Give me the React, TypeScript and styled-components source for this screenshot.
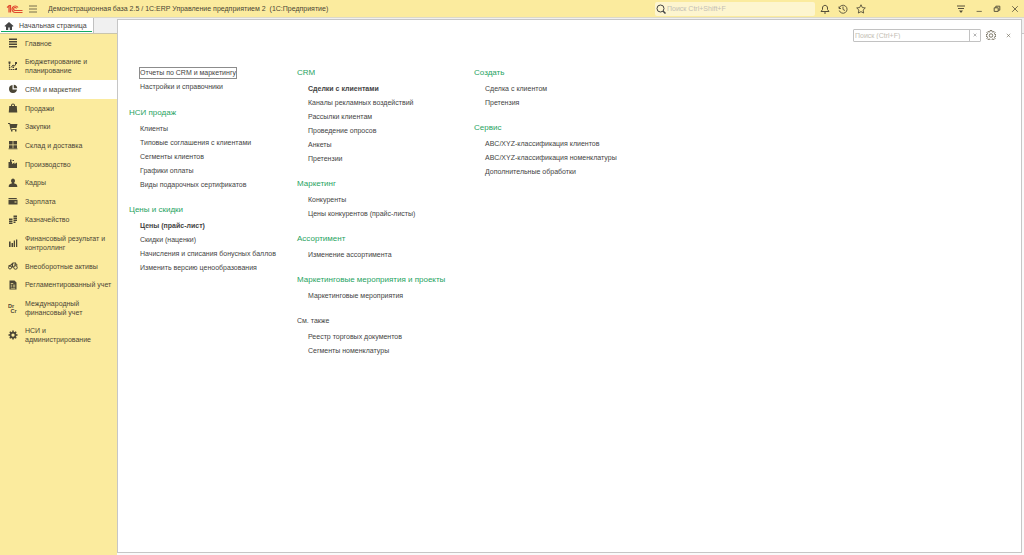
import React from 'react';
import styled, { createGlobalStyle, css } from 'styled-components';

const GlobalStyle = createGlobalStyle`
  *, *::before, *::after { box-sizing: border-box; }
  body {
    margin: 0;
    background: #fff;
    color: #444;
    font: 7px/9px "Liberation Sans", Arial, sans-serif;
  }
  button, input { font: inherit; color: inherit; }
  a { color: inherit; text-decoration: none; }
  ul { list-style: none; margin: 0; padding: 0; }
`;

const Page = styled.div`
  display: flex;
  flex-direction: column;
  min-height: 100vh;
`;

const TitleBar = styled.header`
  display: flex;
  align-items: center;
  height: 17px;
  padding-left: 6px;
  background: #fbeb9e;
`;

const IconButton = styled.button<{ $w?: number }>`
  display: flex;
  flex: none;
  align-items: center;
  justify-content: center;
  width: ${(p) => p.$w ?? 18}px;
  height: 16px;
  padding: 0;
  border: 0;
  background: none;
  color: #554f3a;
`;

const AppTitle = styled.h1`
  flex: 1;
  margin: 0 0 0 5px;
  overflow: hidden;
  color: #4a4535;
  font-size: 7px;
  font-weight: 400;
  line-height: 16px;
  white-space: pre;
`;

const GlobalSearch = styled.label`
  display: flex;
  align-items: center;
  width: 160px;
  height: 14px;
  margin-right: 1px;
  padding-left: 1px;
  border-radius: 2px;
  background: #fdf5cf;
`;

const SearchInput = styled.input`
  flex: 1;
  min-width: 0;
  height: 12px;
  padding: 0 1px;
  border: 0;
  outline: 0;
  background: transparent;
  font-size: 7px;
  &::placeholder { color: #c4c0b4; opacity: 1; }
`;

const WindowButtons = styled.div`
  display: flex;
  margin-left: 82px;
`;

const Body = styled.div`
  display: flex;
  flex: 1;
  padding-right: 2px;
  border-top: 1px solid #dcd9ca;
  background: linear-gradient(#f0f0f0 15px, #c8c8c8 15px, #c8c8c8 16px, #fafafa 16px);
`;

const Side = styled.aside`
  display: flex;
  flex: none;
  flex-direction: column;
  width: 117px;
`;

const TabBar = styled.div`
  height: 16px;
  border-bottom: 1px solid #c9c5ad;
  background: #f0f0f0;
`;

const HomeTab = styled.a`
  display: flex;
  align-items: center;
  width: 94px;
  height: 15px;
  padding: 0 2px 0 4px;
  gap: 5px;
  border-right: 1px solid #c0c0c0;
  background: #fff;
  white-space: nowrap;
  position: relative;
  &::after {
    content: "";
    position: absolute;
    right: 1px;
    bottom: 1px;
    left: 1px;
    height: 1px;
    background: #12ab62;
  }
`;

const Nav = styled.nav`
  flex: 1;
  background: #fbeb9e;
`;

const NavList = styled.ul`
  display: flex;
  flex-direction: column;
  height: 315px;
`;

const NavItem = styled.li<{ $lines: number; $active?: boolean }>`
  display: flex;
  flex: 0 1 ${(p) => (p.$lines === 2 ? 28 : 19)}px;
  align-items: center;
  min-height: 0;
  background: ${(p) => (p.$active ? '#fff' : 'transparent')};
`;

const NavLink = styled.a`
  display: flex;
  align-items: center;
  gap: 7px;
  padding-left: 8px;
  color: #4b4636;
  white-space: pre;
`;

const Panel = styled.main`
  flex: 1;
  min-width: 0;
  margin: 1px 0 2px;
  padding: 8px 4px 0 11px;
  border: 1px solid #c6c6c6;
  background: #fff;
`;

const PanelTools = styled.div`
  display: flex;
  align-items: center;
  justify-content: flex-end;
  height: 14px;
  margin-bottom: 23px;
`;

const PanelSearch = styled.div`
  display: flex;
  align-items: center;
  width: 128px;
  height: 13px;
  margin-right: 2px;
  border: 1px solid #c2c2c2;
  border-radius: 1px;
`;

const ClearButton = styled.button`
  display: flex;
  align-items: center;
  justify-content: center;
  width: 11px;
  height: 11px;
  padding: 0;
  border: 0;
  border-left: 1px solid #c2c2c2;
  background: none;
`;

const Columns = styled.div`
  display: grid;
  grid-template-columns: 168px 177px 1fr;
  align-items: start;
  white-space: nowrap;
`;

const Column = styled.div`
  display: flex;
  flex-direction: column;
  gap: 10px;
`;

const GroupTitle = styled.h2<{ $plain?: boolean }>`
  margin: 0 0 2px;
  font-size: 8px;
  font-weight: 400;
  line-height: 15px;
  color: #1fa35f;
  ${(p) => p.$plain && css`
    color: #444;
    font-size: 7px;
  `}
`;

const LinkList = styled.ul<{ $untitled?: boolean }>`
  padding: ${(p) => (p.$untitled ? 1 : 0)}px 0 ${(p) => (p.$untitled ? 1 : 0)}px 11px;
`;

const LinkRow = styled.li`
  height: 14px;
  line-height: 14px;
`;

const CommandLink = styled.a<{ $bold?: boolean; $focused?: boolean }>`
  display: inline-block;
  line-height: 10px;
  font-weight: ${(p) => (p.$bold ? 700 : 400)};
  outline: ${(p) => (p.$focused ? '1px solid #8c8c8c' : 'none')};
`;

const Svg = ({ size = 10, children }: { size?: number; children: React.ReactNode }) => (
  <svg width={size} height={size} viewBox="0 0 20 20" fill="none" stroke="currentColor" strokeWidth="2" aria-hidden="true">
    {children}
  </svg>
);

const Solid = ({ d }: { d: string }) => (
  <Svg><path d={d} fill="currentColor" stroke="none" fillRule="evenodd" /></Svg>
);

const Cross = ({ size = 8 }: { size?: number }) => (
  <Svg size={size}><path d="M3 3 17 17M17 3 3 17" /></Svg>
);

const gearTeeth = 'M8.3 1h3.4l.5 2.5 1.7.8L16 2.900l2.300 2.400-1.500 2 .7 1.600 2.500.5v3.200l-2.500.5-.7 1.700 1.400 2.100-2.300 2.300-2.100-1.400-1.700.7-.4 2.500H8.300l-.5-2.500-1.600-.7-2.100 1.400-2.300-2.300 1.400-2.100-.7-1.700L0 12.600V9.400l2.500-.5.7-1.600-1.400-2L4 2.900l2.100 1.400 1.700-.8z';

const icons: Record<string, React.ReactNode> = {
  main: <Solid d="M2 1h16v3H2zM2 6h16v3H2zM2 11h16v3H2zM2 16h16v3H2z" />,
  budget: (
    <Svg>
      <path d="M3 4v13h14" strokeWidth="2.400" strokeDasharray="3 1" />
      <path d="M6 13 10 8l3 2 4-6" strokeWidth="2" />
      <path d="M1 1h4v4H1zM14 2h4v4h-4zM9 11h3v3H9zM15 14h3v4h-3z" fill="currentColor" stroke="none" />
    </Svg>
  ),
  crm: <Solid d="M9 2v9h9a8 8 0 1 1-9-9zM11.500 1.500a8 8 0 0 1 7 7h-7z" />,
  sales: <Solid d="M2.500 6H6V5a4 4 0 0 1 8 0v1h3.500l1 13h-17zM8 6h4V5a2 2 0 0 0-4 0z" />,
  purchases: <Solid d="M0 2h4l1 2h14l-2 8H6.500l.5 2h10v1.500H5L2.800 4H0zM6 16h3v3H6zM14 16h3v3h-3z" />,
  stock: <Solid d="M2 2h7.300v7H2zM10.700 2H18v7h-7.300zM2 10.500h7.300v6H2zM10.700 10.500H18v6h-7.300zM1 17h18v1.500H1z" />,
  production: <Solid d="M1 6h3V2h3v4h1v4l5-3v3l5-3v11H1zM4 0h3v1H4zM9 2h3v2H9z" />,
  staff: <Solid d="M10 1a4 4.500 0 0 1 2.500 8v2c3 .5 6 1.500 6 5v2h-17v-2c0-3.500 3-4.500 6-5V9A4 4.500 0 0 1 10 1z" />,
  salary: <Solid d="M1 4h16l1 2H1zM1 7.500h18V17H1zM13 11v2h4v-2z" />,
  treasury: (
    <Svg>
      <path d="M11 1h7v3h-7zM11 5h7v3h-7zM11 9h7v3h-7zM2 7h7v3H2zM2 11h7v3H2zM2 15h7v3H2zM11 13h4v3h-4z" fill="currentColor" stroke="none" />
    </Svg>
  ),
  finance: <Solid d="M2 7h3.200v11H2zM7 10h3.200v8H7zM11.500 5h2.500v13h-2.500zM16 3h2.500v15H16z" />,
  assets: (
    <Svg>
      <circle cx="4" cy="13" r="3" />
      <circle cx="15" cy="13" r="3.500" />
      <path d="M1 10 6 8l4-4h5l2 5M6 12h6M9 5v6M12 8h7" strokeWidth="2.400" />
    </Svg>
  ),
  regulated: <Solid d="M3 1h10l4 4v14H3zM5.500 6h5v1.500h-5zM5.500 9.500h3v1.500h-3zM10 9.500h4.500v1.500H10zM5.500 13h3v1.500h-3zM10 13h4.500v1.500H10zM5.500 16h9v1h-9z" />,
  ifrs: (
    <Svg>
      <g fill="currentColor" stroke="none" fontSize="11" fontWeight="700">
        <text x="0" y="9">Dr</text>
        <text x="5" y="19">Cr</text>
      </g>
    </Svg>
  ),
  admin: (
    <Svg>
      <circle cx="10" cy="10" r="5" strokeWidth="3.500" />
      <path d="M10 1v3M10 16v3M1 10h3M16 10h3M3.600 3.600l2.200 2.200M14.200 14.200l2.200 2.200M3.600 16.400l2.200-2.200M14.200 5.800l2.200-2.200" strokeWidth="3" />
    </Svg>
  ),
};

const sections: { id: string; label: string }[] = [
  { id: 'main', label: 'Главное' },
  { id: 'budget', label: 'Бюджетирование и\nпланирование' },
  { id: 'crm', label: 'CRM и маркетинг' },
  { id: 'sales', label: 'Продажи' },
  { id: 'purchases', label: 'Закупки' },
  { id: 'stock', label: 'Склад и доставка' },
  { id: 'production', label: 'Производство' },
  { id: 'staff', label: 'Кадры' },
  { id: 'salary', label: 'Зарплата' },
  { id: 'treasury', label: 'Казначейство' },
  { id: 'finance', label: 'Финансовый результат и\nконтроллинг' },
  { id: 'assets', label: 'Внеоборотные активы' },
  { id: 'regulated', label: 'Регламентированный учет' },
  { id: 'ifrs', label: 'Международный\nфинансовый учет' },
  { id: 'admin', label: 'НСИ и\nадминистрирование' },
];

type Group = { title?: string; plain?: boolean; bold?: string; focused?: string; links: string[] };

const columns: Group[][] = [
  [
    { focused: 'Отчеты по CRM и маркетингу', links: ['Отчеты по CRM и маркетингу', 'Настройки и справочники'] },
    { title: 'НСИ продаж', links: ['Клиенты', 'Типовые соглашения с клиентами', 'Сегменты клиентов', 'Графики оплаты', 'Виды подарочных сертификатов'] },
    { title: 'Цены и скидки', bold: 'Цены (прайс-лист)', links: ['Цены (прайс-лист)', 'Скидки (наценки)', 'Начисления и списания бонусных баллов', 'Изменить версию ценообразования'] },
  ],
  [
    { title: 'CRM', bold: 'Сделки с клиентами', links: ['Сделки с клиентами', 'Каналы рекламных воздействий', 'Рассылки клиентам', 'Проведение опросов', 'Анкеты', 'Претензии'] },
    { title: 'Маркетинг', links: ['Конкуренты', 'Цены конкурентов (прайс-листы)'] },
    { title: 'Ассортимент', links: ['Изменение ассортимента'] },
    { title: 'Маркетинговые мероприятия и проекты', links: ['Маркетинговые мероприятия'] },
    { title: 'См. также', plain: true, links: ['Реестр торговых документов', 'Сегменты номенклатуры'] },
  ],
  [
    { title: 'Создать', links: ['Сделка с клиентом', 'Претензия'] },
    { title: 'Сервис', links: ['ABC/XYZ-классификация клиентов', 'ABC/XYZ-классификация номенклатуры', 'Дополнительные обработки'] },
  ],
];

const Logo = () => (
  <svg width="17" height="10" viewBox="0 0 34 20" fill="none" stroke="#e0492f" strokeWidth="2.400" aria-label="1С" role="img">
    <path d="M2 7 6 4v13M5 3h4v14" />
    <path d="M24 7a6.500 6.500 0 1 0-6 10h15" />
    <path d="M21 9a3 3 0 1 0-3 4h15" />
  </svg>
);

export default function App() {
  return (
    <Page>
      <GlobalStyle />
      <TitleBar>
        <Logo />
        <IconButton $w={20} aria-label="Главное меню">
          <Svg><path d="M2 4h16M2 10h16M2 16h16" strokeWidth="1.600" /></Svg>
        </IconButton>
        <AppTitle>{'Демонстрационная база 2.5 / 1С:ERP Управление предприятием 2  (1С:Предприятие)'}</AppTitle>
        <GlobalSearch>
          <Svg><circle cx="9" cy="9" r="7" /><path d="m14 14 5 5" strokeWidth="3" /></Svg>
          <SearchInput name="global" aria-label="Поиск" placeholder="Поиск Ctrl+Shift+F" />
        </GlobalSearch>
        <IconButton aria-label="Уведомления">
          <Svg><path d="M2 15h16l-3-4V8c0-7-10-7-10 0v3zM8 18h4" /></Svg>
        </IconButton>
        <IconButton aria-label="История">
          <Svg><path d="M2 5v4h4M2.500 8a8 8 0 1 1 0 5M10 5v6l4 2" strokeWidth="1.800" /></Svg>
        </IconButton>
        <IconButton aria-label="Избранное">
          <Svg><path d="m10 1.500 2.600 5.600 6 .8-4.400 4.200 1.100 6L10 15.200l-5.300 2.900 1.100-6L1.400 7.900l6-.8z" strokeWidth="1.800" /></Svg>
        </IconButton>
        <WindowButtons>
          <IconButton aria-label="Настройки окна">
            <Svg><path d="M2 4h16M4 9h12" /><path d="M6 13h8l-4 5z" fill="currentColor" stroke="none" /></Svg>
          </IconButton>
          <IconButton aria-label="Свернуть"><Svg size={8}><path d="M4 16h13" /></Svg></IconButton>
          <IconButton aria-label="Восстановить">
            <Svg size={8}><path d="M3 7h10v9H3zM7 7V3h10v10h-4" strokeWidth="2.400" /></Svg>
          </IconButton>
          <IconButton aria-label="Закрыть окно"><Cross size={8} /></IconButton>
        </WindowButtons>
      </TitleBar>
      <Body>
        <Side>
          <TabBar>
            <HomeTab href="#home">
              <Solid d="M10 2 19 10l-1.500 1.500L16 10.300V18h-4.500v-5h-3v5H4v-7.700l-1.500 1.200L1 10z" />
              Начальная страница
            </HomeTab>
          </TabBar>
          <Nav aria-label="Разделы">
            <NavList>
              {sections.map((s) => (
                <NavItem key={s.id} $lines={s.label.split('\n').length} $active={s.id === 'crm'}>
                  <NavLink href={`#${s.id}`}>{icons[s.id]}<span>{s.label}</span></NavLink>
                </NavItem>
              ))}
            </NavList>
          </Nav>
        </Side>
        <Panel>
          <PanelTools>
            <PanelSearch>
              <SearchInput name="panel" aria-label="Поиск в разделе" placeholder="Поиск (Ctrl+F)" />
              <ClearButton aria-label="Очистить"><Cross size={4} /></ClearButton>
            </PanelSearch>
            <IconButton $w={16} aria-label="Настройка">
              <Svg><path d={gearTeeth} strokeWidth="1.500" /><circle cx="10" cy="11" r="3.500" strokeWidth="1.500" /></Svg>
            </IconButton>
            <IconButton aria-label="Закрыть"><Cross size={5} /></IconButton>
          </PanelTools>
          <Columns>
            {columns.map((groups, i) => (
              <Column key={i}>
                {groups.map((g, j) => (
                  <section key={j}>
                    {g.title && <GroupTitle $plain={g.plain}>{g.title}</GroupTitle>}
                    <LinkList $untitled={!g.title}>
                      {g.links.map((text) => (
                        <LinkRow key={text}>
                          <CommandLink href="#command" $bold={text === g.bold} $focused={text === g.focused}>{text}</CommandLink>
                        </LinkRow>
                      ))}
                    </LinkList>
                  </section>
                ))}
              </Column>
            ))}
          </Columns>
        </Panel>
      </Body>
    </Page>
  );
}
